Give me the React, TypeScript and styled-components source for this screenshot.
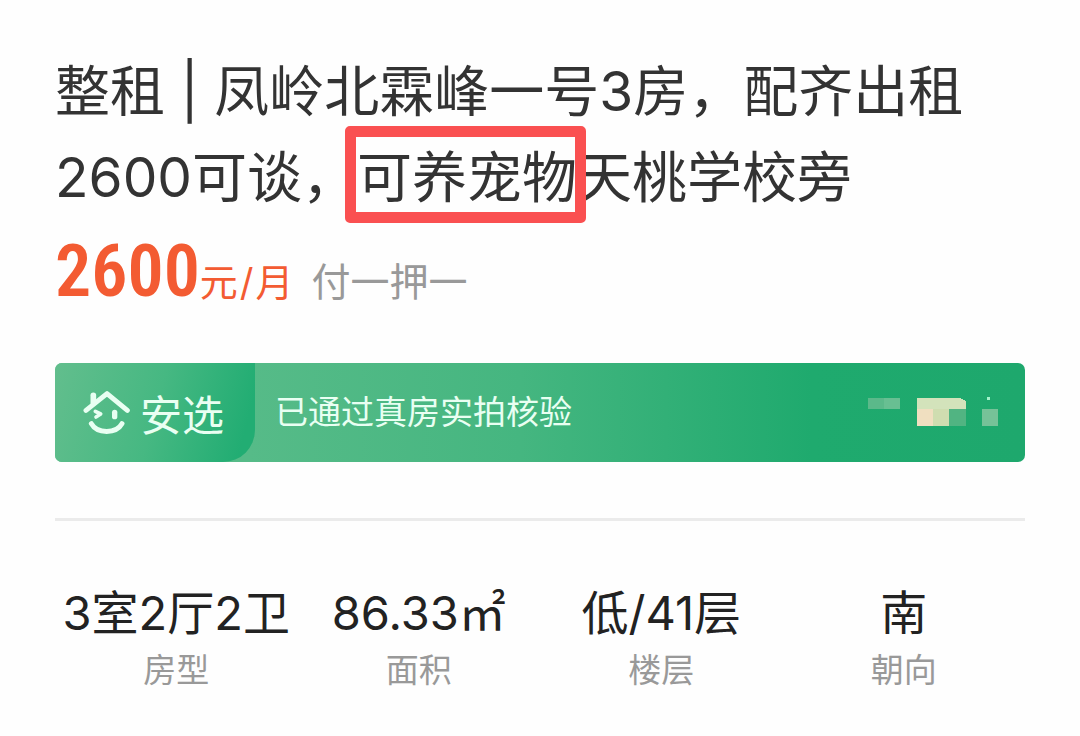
import React from "react";
import styled, { createGlobalStyle } from "styled-components";

const GlobalStyle = createGlobalStyle`
  * { box-sizing: border-box; }
  body {
    margin: 0;
    background: #fefefe;
    color: #333;
    font-family: Inter, "Noto Sans CJK SC", sans-serif;
  }
`;

const Page = styled.main`
  padding: 48px 55px 40px;
`;

const Title = styled.h1`
  margin: 0;
  font-size: 55px;
  line-height: 86px;
  font-weight: 400;
`;

const Highlight = styled.span`
  position: relative;
  display: inline-block;

  &::after {
    content: "";
    position: absolute;
    inset: -8px -9px -3px -12px;
    border: 11px solid #fa5051;
    border-radius: 5px;
  }
`;

const PriceRow = styled.p`
  display: flex;
  align-items: baseline;
  margin: 0;
  height: 100px;
  line-height: 104px;
  color: #f35b32;
`;

const Amount = styled.strong`
  font-family: "Roboto Condensed", Roboto, sans-serif;
  font-size: 72px;
  font-weight: 600;
`;

const Unit = styled.span`
  display: flex;
  gap: 2px;
  font-size: 38px;
`;

const Terms = styled.span`
  margin-left: 18px;
  font-size: 39px;
  color: #999;
`;

const Banner = styled.section`
  display: flex;
  align-items: stretch;
  height: 99px;
  margin-top: 43px;
  border-radius: 7px;
  overflow: hidden;
  color: #e9fff2;
  background: linear-gradient(90deg, #56bb88 20%, #45b680 48%, #1faa6e 78%, #1ea86d);
`;

const Badge = styled.div`
  display: flex;
  align-items: center;
  gap: 9px;
  width: 200px;
  padding-left: 28px;
  border-bottom-right-radius: 32px;
  font-size: 42px;
  background: linear-gradient(105deg, #62be8d, #46b882 50%, #22ad73 92%);
`;

const BannerText = styled.p`
  flex: 1;
  margin: 0;
  padding-left: 20px;
  font-size: 33px;
  line-height: 99px;
`;

const Mosaic = styled.svg`
  align-self: center;
  margin-right: 26px;
  margin-bottom: 4px;
`;

const Stats = styled.dl`
  display: grid;
  grid-template-columns: repeat(4, 1fr);
  margin: 56px 0 0;
  padding-top: 59px;
  border-top: 3px solid #ebebeb;
  text-align: center;
`;

const Stat = styled.div`
  display: flex;
  flex-direction: column-reverse;
`;

const StatLabel = styled.dt`
  font-size: 33px;
  line-height: 48px;
  color: #999;
`;

const StatValue = styled.dd`
  margin: 0;
  font-size: 47px;
  line-height: 66px;
  color: #222;
  white-space: nowrap;
`;

const stats = [
  { label: "房型", value: "3室2厅2卫" },
  { label: "面积", value: "86.33㎡" },
  { label: "楼层", value: "低/41层" },
  { label: "朝向", value: "南" },
];

function HouseLogo() {
  return (
    <svg width="48" height="45" viewBox="129 120 144 135" fill="none" stroke="currentColor" strokeLinecap="round" strokeLinejoin="round" aria-hidden="true">
      <path d="M138 181L201 131L262 181" strokeWidth="15" />
      <path d="M160 136V158" strokeWidth="17" />
      <path d="M166 184L182 192L168 201" strokeWidth="11" />
      <path d="M224 187V200" strokeWidth="16" />
      <path d="M154 221C171 252 229 252 246 221" strokeWidth="15" />
    </svg>
  );
}

export default function App() {
  return (
    <>
      <GlobalStyle />
      <Page>
        <Title>
          整租 | 凤岭北霖峰一号3房，配齐出租2600可谈，<Highlight>可养宠物</Highlight>天桃学校旁
        </Title>
        <PriceRow>
          <Amount>2600</Amount>
          <Unit>
            <span>元</span>
            <span>/</span>
            <span>月</span>
          </Unit>
          <Terms>付一押一</Terms>
        </PriceRow>
        <Banner>
          <Badge>
            <HouseLogo />
            安选
          </Badge>
          <BannerText>已通过真房实拍核验</BannerText>
          <Mosaic width="132" height="30" viewBox="0 0 132 30" shapeRendering="crispEdges" aria-hidden="true">
            <path d="M1 2h16v11H1z" fill="#5bb98a" />
            <path d="M17 2h16v11H17z" fill="#68bf92" />
            <path d="M50 2h43l6 3v8H50z" fill="#d3e3bb" />
            <path d="M50 13h16v17H50z" fill="#f0dfc0" />
            <path d="M66 13h16v17H66z" fill="#cfddb0" />
            <path d="M82 13h17v17H82z" fill="#51b482" />
            <path d="M115 13h16v17h-16z" fill="#76c298" />
            <path d="M120 1h3v3h-3z" fill="#a5f3cb" />
          </Mosaic>
        </Banner>
        <Stats>
          {stats.map(({ label, value }) => (
            <Stat key={label}>
              <StatLabel>{label}</StatLabel>
              <StatValue>{value}</StatValue>
            </Stat>
          ))}
        </Stats>
      </Page>
    </>
  );
}
